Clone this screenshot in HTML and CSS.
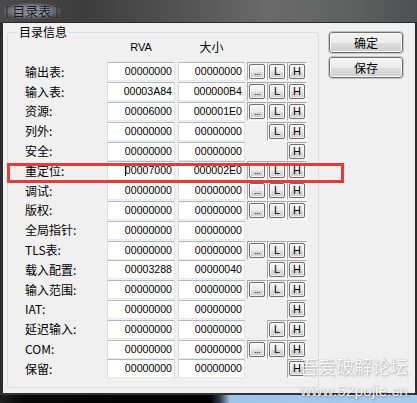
FILE: index.html
```html
<!DOCTYPE html>
<html>
<head>
<meta charset="utf-8">
<link rel="stylesheet" href="styles.css">
</head>
<body>
<div class="screen">
  <header class="titlebar"><span class="title">[ 目录表 ]</span></header>
  <main class="window">
    <fieldset class="group">
      <legend>目录信息</legend>
      <div class="row head"><span class="label"></span><span class="hcol rva-h">RVA</span><span class="hcol size-h">大小</span></div>
      <div class="row"><span class="label">输出表:</span><span class="box">00000000</span><span class="box size">00000000</span><span class="cells"><span class="cell"><span class="btn dots">...</span></span><span class="cell"><span class="btn">L</span></span><span class="cell"><span class="btn">H</span></span></span></div>
      <div class="row"><span class="label">输入表:</span><span class="box">00003A84</span><span class="box size">000000B4</span><span class="cells"><span class="cell"><span class="btn dots">...</span></span><span class="cell"><span class="btn">L</span></span><span class="cell"><span class="btn">H</span></span></span></div>
      <div class="row"><span class="label">资源:</span><span class="box">00006000</span><span class="box size">000001E0</span><span class="cells"><span class="cell"><span class="btn dots">...</span></span><span class="cell"><span class="btn">L</span></span><span class="cell"><span class="btn">H</span></span></span></div>
      <div class="row"><span class="label">列外:</span><span class="box">00000000</span><span class="box size">00000000</span><span class="cells"><span class="cell empty"></span><span class="cell"><span class="btn">L</span></span><span class="cell"><span class="btn">H</span></span></span></div>
      <div class="row"><span class="label">安全:</span><span class="box">00000000</span><span class="box size">00000000</span><span class="cells"><span class="cell empty"></span><span class="cell empty"></span><span class="cell"><span class="btn">H</span></span></span></div>
      <div class="row"><span class="label">重定位:</span><span class="box"><span class="caret"></span>00007000</span><span class="box size">000002E0</span><span class="cells"><span class="cell"><span class="btn dots">...</span></span><span class="cell"><span class="btn">L</span></span><span class="cell"><span class="btn">H</span></span></span></div>
      <div class="row"><span class="label">调试:</span><span class="box">00000000</span><span class="box size">00000000</span><span class="cells"><span class="cell"><span class="btn dots">...</span></span><span class="cell"><span class="btn">L</span></span><span class="cell"><span class="btn">H</span></span></span></div>
      <div class="row"><span class="label">版权:</span><span class="box">00000000</span><span class="box size">00000000</span><span class="cells"><span class="cell"><span class="btn dots">...</span></span><span class="cell"><span class="btn">L</span></span><span class="cell"><span class="btn">H</span></span></span></div>
      <div class="row"><span class="label">全局指针:</span><span class="box">00000000</span><span class="box size">00000000</span></div>
      <div class="row"><span class="label">TLS表:</span><span class="box">00000000</span><span class="box size">00000000</span><span class="cells"><span class="cell"><span class="btn dots">...</span></span><span class="cell"><span class="btn">L</span></span><span class="cell"><span class="btn">H</span></span></span></div>
      <div class="row"><span class="label">载入配置:</span><span class="box">00003288</span><span class="box size">00000040</span><span class="cells"><span class="cell empty"></span><span class="cell"><span class="btn">L</span></span><span class="cell"><span class="btn">H</span></span></span></div>
      <div class="row"><span class="label">输入范围:</span><span class="box">00000000</span><span class="box size">00000000</span><span class="cells"><span class="cell"><span class="btn dots">...</span></span><span class="cell"><span class="btn">L</span></span><span class="cell"><span class="btn">H</span></span></span></div>
      <div class="row"><span class="label">IAT:</span><span class="box">00000000</span><span class="box size">00000000</span><span class="cells"><span class="cell empty"></span><span class="cell empty"></span><span class="cell"><span class="btn">H</span></span></span></div>
      <div class="row"><span class="label">延迟输入:</span><span class="box">00000000</span><span class="box size">00000000</span><span class="cells"><span class="cell empty"></span><span class="cell"><span class="btn">L</span></span><span class="cell"><span class="btn">H</span></span></span></div>
      <div class="row"><span class="label">COM:</span><span class="box">00000000</span><span class="box size">00000000</span><span class="cells"><span class="cell"><span class="btn dots">...</span></span><span class="cell"><span class="btn">L</span></span><span class="cell"><span class="btn">H</span></span></span></div>
      <div class="row"><span class="label">保留:</span><span class="box">00000000</span><span class="box size">00000000</span><span class="cells"><span class="cell empty"></span><span class="cell empty"></span><span class="cell"><span class="btn">H</span></span></span></div>
    </fieldset>
    <div class="side">
      <button class="wbtn">确定</button>
      <button class="wbtn">保存</button>
    </div>
  </main>
  <footer class="taskbar"></footer>
  <div class="highlight"></div>
  <div class="watermark"><div class="wm-cn">吾爱破解论坛</div><div class="wm-url">www.52pojie.cn</div></div>
</div>
</body>
</html>
```
FILE: styles.css
```css
* { box-sizing: border-box; }
html, body { margin: 0; padding: 0; }
body {
  width: 417px;
  height: 403px;
  overflow: hidden;
  background: #111;
  font-family: "Noto Sans CJK SC", sans-serif;
}
.screen {
  position: relative;
  width: 417px;
  height: 403px;
  display: flex;
  flex-direction: column;
}
.titlebar {
  height: 22px;
  flex: none;
  display: flex;
  align-items: center;
  padding-left: 3px;
  background: linear-gradient(90deg, #4a4a4a 0, #3c3c3c 20%, #555 45%, #6a6a6a 65%, #5f6060 85%, #4e4f50 100%);
}
.title {
  font-size: 13px;
  line-height: 16px;
  color: #101830;
  padding: 0 2px;
  background: radial-gradient(ellipse at center, rgba(140,140,140,.9) 40%, rgba(110,110,110,0) 75%);
  text-shadow: 0 0 2px rgba(190,190,190,.6);
}
.window {
  flex: none;
  height: 373px;
  display: flex;
  background: #f0f0f0;
  border-top: 1px solid #2a2a2a;
  border-left: 3px solid #2c2c2c;
  border-right: 2px solid #2c2c2c;
  border-bottom: 2px solid #333;
  padding-left: 4px;
}
.group {
  margin: 2px 0 0 0;
  padding: 0 0 8px 17px;
  width: 312px;
  border: 1px solid #d5dfe5;
  border-radius: 3px;
  align-self: flex-start;
}
.group legend {
  margin-left: -8px;
  padding: 0 2px;
  font-size: 12px;
  line-height: 14px;
  color: #000;
}
.row {
  display: flex;
  align-items: center;
  height: 19.8px;
}
.row.head {
  height: 23px;
  align-items: flex-start;
  padding-top: 1px;
}
.hcol {
  text-align: center;
  line-height: 14px;
  color: #000;
}
.rva-h {
  width: 68px;
  font-family: "Liberation Sans", sans-serif;
  font-size: 11px;
}
.size-h {
  width: 67px;
  margin-left: 3px;
  font-size: 12px;
}
.label {
  width: 82px;
  flex: none;
  font-size: 12px;
  line-height: 14px;
  color: #000;
  white-space: nowrap;
}
.box {
  position: relative;
  flex: none;
  width: 68px;
  height: 19px;
  background: #fff;
  border: 1px solid;
  border-color: #b5b7bd #e2e3ea #e6e9ee #dcdde3;
  font-family: "Liberation Sans", sans-serif;
  font-size: 10.6px;
  line-height: 17px;
  text-align: right;
  padding-right: 2px;
  color: #000;
}
.box.size { width: 67px; margin-left: 3px; }
.caret {
  display: inline-block;
  width: 1px;
  height: 13px;
  background: #000;
  vertical-align: -2px;
  margin-right: -1px;
}
.cells {
  display: flex;
  margin-left: 2px;
}
.cell {
  width: 20px;
  height: 19px;
  padding: 1px;
  border: 1px solid;
  border-color: #a9a9a9 #fdfdfd #fdfdfd #a9a9a9;
}
.cell.empty { border-color: transparent; }
.btn {
  display: block;
  width: 16px;
  height: 15px;
  border: 1px solid #6f6f6f;
  border-radius: 2px;
  background: linear-gradient(#f7f7f7 0, #ececec 50%, #dcdcdc 51%, #cfcfcf 100%);
  box-shadow: inset 0 0 0 1px rgba(255,255,255,.7);
  font-family: "Liberation Sans", sans-serif;
  font-size: 11px;
  line-height: 13px;
  text-align: center;
  color: #000;
}
.btn.dots {
  font-size: 9px;
  line-height: 15px;
  letter-spacing: -0.5px;
}
.side {
  display: flex;
  flex-direction: column;
  gap: 4px;
  margin-left: 10px;
  padding-top: 9px;
}
.wbtn {
  width: 74px;
  height: 21px;
  padding: 0;
  border: 1px solid #707070;
  border-radius: 3px;
  outline: 1px solid #c4c4c4;
  background: linear-gradient(#f4f4f4 0, #ececec 50%, #dddddd 51%, #d0d0d0 100%);
  box-shadow: inset 0 0 0 1px #fbfbfb;
  font-family: "Noto Sans CJK SC", sans-serif;
  font-size: 12px;
  line-height: 18px;
  color: #000;
}
.taskbar {
  flex: none;
  height: 8px;
  background: linear-gradient(90deg, #1e1e1e 0, #060606 25px, #000 210px, #2a3a4a 220px, #9ec4e8 230px, #a8cbee 100%);
}
.highlight {
  position: absolute;
  left: 7px;
  top: 163px;
  width: 337px;
  height: 20px;
  border: 3px solid #e83a3a;
}
.watermark {
  position: absolute;
  left: 298px;
  top: 356px;
  width: 112px;
  text-align: center;
  color: #ffffff;
  text-shadow: 0 0 1px rgba(0,0,0,.35), 1px 1px 2px rgba(0,0,0,.25);
  opacity: .9;
}
.wm-cn {
  font-size: 18px;
  line-height: 20px;
  letter-spacing: 0;
}
.wm-url {
  font-family: "Liberation Sans", sans-serif;
  font-size: 15.5px;
  line-height: 18px;
  margin-top: 6px;
}
```
